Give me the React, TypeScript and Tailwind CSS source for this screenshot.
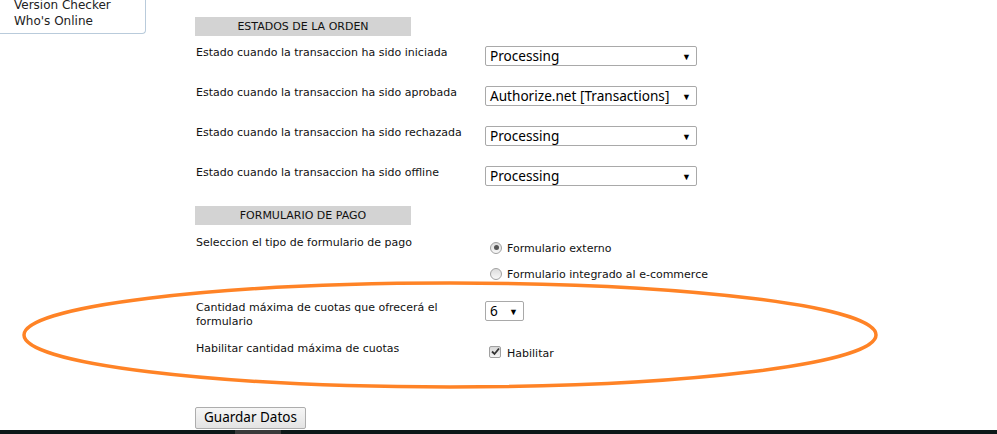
import React from "react";

const estados = [
  { label: "Estado cuando la transaccion ha sido iniciada", value: "Processing" },
  { label: "Estado cuando la transaccion ha sido aprobada", value: "Authorize.net [Transactions]" },
  { label: "Estado cuando la transaccion ha sido rechazada", value: "Processing" },
  { label: "Estado cuando la transaccion ha sido offline", value: "Processing" },
];

function FakeSelect({ value, width }: { value: string; width: string }) {
  return (
    <div
      className={`${width} h-[20px] flex items-center justify-between border border-[#a9a9a9] rounded-[2px] bg-white pl-[4px] pr-[5px] text-[13.6px] text-black font-['Noto_Sans',sans-serif] leading-none`}
    >
      <span className="whitespace-nowrap">{value}</span>
      <span className="text-[9px] leading-none">▼</span>
    </div>
  );
}

function Radio({ checked }: { checked?: boolean }) {
  return (
    <span className="w-[12px] h-[12px] rounded-full border border-[#a0a0a0] bg-gradient-to-b from-[#dcdcdc] to-[#f8f8f8] flex items-center justify-center shrink-0">
      {checked && <span className="w-[5px] h-[5px] rounded-full bg-[#555]" />}
    </span>
  );
}

function SectionHeader({ title }: { title: string }) {
  return (
    <div className="w-[216px] h-[19px] bg-[#d3d3d3] flex items-center justify-center text-[11px] text-[#111]">
      {title}
    </div>
  );
}

export default function App() {
  return (
    <div className="relative w-[997px] h-[434px] overflow-hidden bg-white font-['DejaVu_Sans',sans-serif] text-[#111]">
      <div className="flex">
        <div className="w-[146px] shrink-0">
          <div className="h-[37px] border-r border-b border-[#b9cbdb] rounded-br-[4px] pl-[14px] text-[12px] leading-[16px] text-[#222]">
            <div className="-mt-[3px]">
              <div>Version Checker</div>
              <div>Who's Online</div>
            </div>
          </div>
        </div>

        <div className="ml-[49px] pt-[17px] text-[11px] leading-[13px]">
          <SectionHeader title="ESTADOS DE LA ORDEN" />
          <div className="mt-[10px]">
            {estados.map((e, i) => (
              <div key={i} className="flex h-[40px] items-start">
                <div className="w-[290px] pl-[1px]">{e.label}</div>
                <FakeSelect value={e.value} width="w-[212px]" />
              </div>
            ))}
          </div>

          <SectionHeader title="FORMULARIO DE PAGO" />
          <div className="flex mt-[11px]">
            <div className="w-[290px] pl-[1px]">Seleccion el tipo de formulario de pago</div>
            <div className="flex flex-col gap-[11px] pt-[4px] pl-[5px]">
              <label className="flex items-center gap-[5px]">
                <Radio checked />
                <span className="mt-[2px]">Formulario externo</span>
              </label>
              <label className="flex items-center gap-[5px]">
                <Radio />
                <span className="mt-[2px]">Formulario integrado al e-commerce</span>
              </label>
            </div>
          </div>

          <div className="flex mt-[20px]">
            <div className="w-[290px] pl-[1px] pr-[10px] leading-[14px]">
              Cantidad máxima de cuotas que ofrecerá el formulario
            </div>
            <FakeSelect value="6" width="w-[39px]" />
          </div>

          <div className="flex mt-[13px]">
            <div className="w-[290px] pl-[1px]">Habilitar cantidad máxima de cuotas</div>
            <label className="flex items-center gap-[6px] pl-[4px] pt-[1px]">
              <span className="w-[12px] h-[12px] border border-[#a0a0a0] rounded-[2px] bg-gradient-to-b from-[#d8d8d8] to-[#f4f4f4] flex items-center justify-center">
                <svg width="9" height="9" viewBox="0 0 9 9">
                  <path d="M1 4.5 L3.5 7 L8 1.5" stroke="#333" strokeWidth="1.8" fill="none" />
                </svg>
              </span>
              <span className="mt-[4px]">Habilitar</span>
            </label>
          </div>

          <button className="mt-[47px] h-[22px] px-[8px] border border-[#adadad] rounded-[2px] bg-gradient-to-b from-[#f6f6f6] to-[#e3e3e3] text-[13.5px] text-black font-['Noto_Sans',sans-serif] leading-none">
            Guardar Datos
          </button>
        </div>
      </div>

      <div className="absolute left-0 right-0 bottom-0 h-[4px] bg-[#0d1818] flex">
        <div className="ml-[235px] w-[46px] bg-[#3a3a3a]" />
      </div>

      <svg className="absolute left-0 top-0 pointer-events-none" width="997" height="434">
        <ellipse cx="450" cy="335" rx="426" ry="52" fill="none" stroke="#ff8326" strokeWidth="3.5" />
      </svg>
    </div>
  );
}
